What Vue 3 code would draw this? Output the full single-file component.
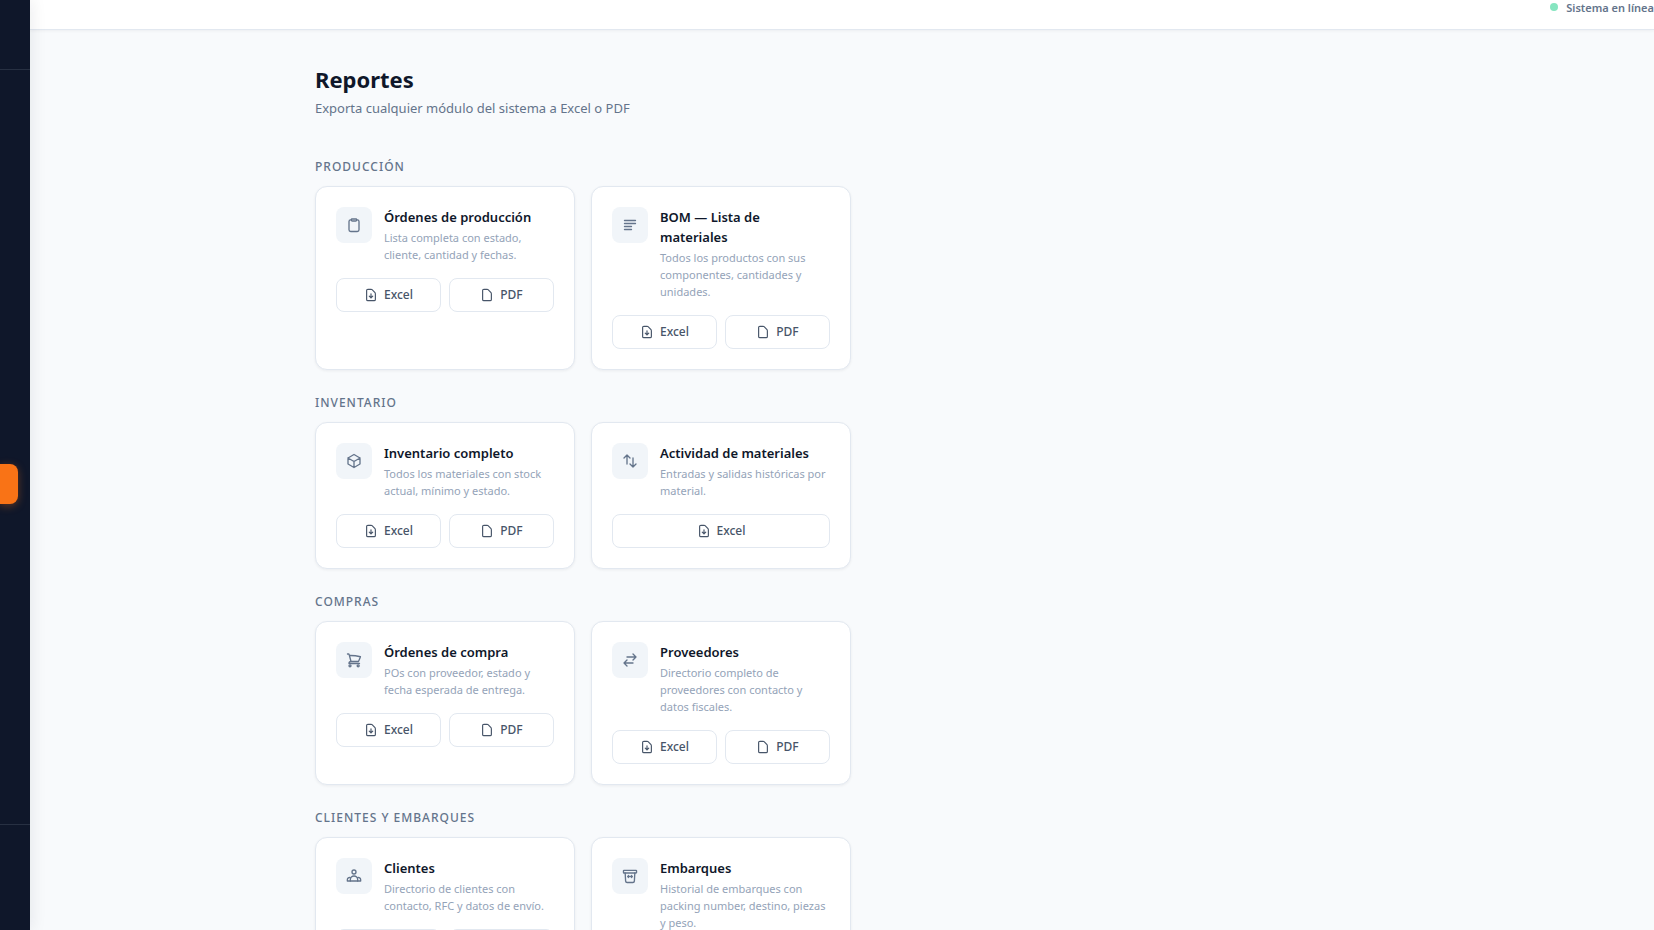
<script setup>
const page = 'M19.5 10.5v9A2.25 2.25 0 0 1 17.25 21.75H6.75A2.25 2.25 0 0 1 4.5 19.5V4.5A2.25 2.25 0 0 1 6.75 2.25h5.5c.6 0 1.17.24 1.6.66l4.99 5.1c.42.43.66 1 .66 2.49Z'
const icons = {
  clipboard: ['M9 3h6a1 1 0 0 1 1 1v.5A1.5 1.5 0 0 1 14.5 6h-5A1.5 1.5 0 0 1 8 4.5V4a1 1 0 0 1 1-1Z', 'M8 4.25H7A2.5 2.5 0 0 0 4.5 6.75v12.5a2.5 2.5 0 0 0 2.5 2.5h10a2.5 2.5 0 0 0 2.5-2.5V6.75a2.5 2.5 0 0 0-2.5-2.5h-1'],
  lines: ['M3.75 5.25h16.5M3.75 9.75h16.5M3.75 14.25h10.5M3.75 18.75h10.5'],
  cube: ['m21 7.5-9-5.25L3 7.5m18 0-9 5.25m9-5.25v9l-9 5.25M3 7.5l9 5.25M3 7.5v9l9 5.25m0-9v9'],
  upDown: ['M3 7.5 7.5 3m0 0L12 7.5M7.5 3v13.5m13.5 0L16.5 21m0 0L12 16.5m4.5 4.5V7.5'],
  leftRight: ['M7.5 21 3 16.5m0 0L7.5 12M3 16.5h13.5m0-13.5L21 7.5m0 0L16.5 12M21 7.5H7.5'],
  cart: ['M2.25 3h1.386c.51 0 .955.343 1.087.835l.383 1.437M7.5 14.25a3 3 0 0 0-3 3h15.75m-12.75-3h11.218c1.121-2.3 2.1-4.684 2.924-7.138a60.114 60.114 0 0 0-16.536-1.84M7.5 14.25 5.106 5.272', 'M7.5 20.75a1.5 1.5 0 1 1-3 0 1.5 1.5 0 0 1 3 0Zm12.25 0a1.5 1.5 0 1 1-3 0 1.5 1.5 0 0 1 3 0Z'],
  group: ['M15 6a3 3 0 1 1-6 0 3 3 0 0 1 6 0Z', 'M6.5 19.5v-2a5.5 5.5 0 0 1 11 0v2', 'M6.5 14.6A3.2 3.2 0 0 0 2 17.5v2h20v-2a3.2 3.2 0 0 0-4.5-2.9'],
  archive: ['M3 3.5h18a.8.8 0 0 1 .8.8V6.7a.8.8 0 0 1-.8.8H3a.8.8 0 0 1-.8-.8V4.3a.8.8 0 0 1 .8-.8Z', 'm4.75 7.5.7 12.2a2.2 2.2 0 0 0 2.2 2h8.7a2.2 2.2 0 0 0 2.2-2l.7-12.2', 'M9.5 11.25v3M14.5 11.25v3M8.5 12.75h7'],
  excel: [page, 'M12 10v7m-3-3 3 3 3-3'],
  pdf: [page],
}

const both = ['Excel', 'PDF']
const sections = [
  {
    name: 'Producción',
    reports: [
      { icon: 'clipboard', title: 'Órdenes de producción', text: 'Lista completa con estado, cliente, cantidad y fechas.', formats: both },
      { icon: 'lines', title: 'BOM — Lista de materiales', text: 'Todos los productos con sus componentes, cantidades y unidades.', formats: both },
    ],
  },
  {
    name: 'Inventario',
    reports: [
      { icon: 'cube', title: 'Inventario completo', text: 'Todos los materiales con stock actual, mínimo y estado.', formats: both },
      { icon: 'upDown', title: 'Actividad de materiales', text: 'Entradas y salidas históricas por material.', formats: ['Excel'] },
    ],
  },
  {
    name: 'Compras',
    reports: [
      { icon: 'cart', title: 'Órdenes de compra', text: 'POs con proveedor, estado y fecha esperada de entrega.', formats: both },
      { icon: 'leftRight', title: 'Proveedores', text: 'Directorio completo de proveedores con contacto y datos fiscales.', formats: both },
    ],
  },
  {
    name: 'Clientes y embarques',
    reports: [
      { icon: 'group', title: 'Clientes', text: 'Directorio de clientes con contacto, RFC y datos de envío.', formats: both },
      { icon: 'archive', title: 'Embarques', text: 'Historial de embarques con packing number, destino, piezas y peso.', formats: both },
    ],
  },
]
</script>

<template>
  <div class="app">
    <aside class="sidebar">
      <div class="brand"></div>
      <nav class="nav"><div class="active-item"></div></nav>
      <div class="account"></div>
    </aside>
    <div class="page">
      <header class="topbar">
        <span class="dot"></span>
        <span>Sistema en línea</span>
      </header>
      <main class="main">
        <div class="content">
          <h1>Reportes</h1>
          <p class="lead">Exporta cualquier módulo del sistema a Excel o PDF</p>
          <section v-for="section in sections" :key="section.name" class="section">
            <h2>{{ section.name }}</h2>
            <div class="cards">
              <article v-for="report in section.reports" :key="report.title" class="card">
                <div class="info">
                  <span class="tile">
                    <svg viewBox="0 0 24 24" aria-hidden="true"><path v-for="d in icons[report.icon]" :key="d" :d="d" /></svg>
                  </span>
                  <div class="copy">
                    <h3>{{ report.title }}</h3>
                    <p>{{ report.text }}</p>
                  </div>
                </div>
                <div class="actions">
                  <button v-for="format in report.formats" :key="format" type="button">
                    <svg viewBox="0 0 24 24" aria-hidden="true"><path v-for="d in icons[format.toLowerCase()]" :key="d" :d="d" /></svg>
                    {{ format }}
                  </button>
                </div>
              </article>
            </div>
          </section>
        </div>
      </main>
    </div>
  </div>
</template>

<style>
body {
  margin: 0;
}
</style>

<style scoped>
* {
  box-sizing: border-box;
}
.app {
  display: flex;
  height: 100vh;
  overflow: hidden;
  background: #f8fafc;
  color: #0f172a;
  font-family: "Segoe UI", "Noto Sans", "Open Sans", sans-serif;
}
h1,
h2,
h3,
p {
  margin: 0;
}
svg {
  fill: none;
  stroke: currentColor;
  stroke-width: 2;
  stroke-linecap: round;
  stroke-linejoin: round;
  flex: none;
}
.sidebar {
  display: flex;
  flex-direction: column;
  flex: none;
  width: 30px;
  background: #0f172a;
  box-shadow: 2px 0 16px rgba(15, 23, 42, 0.08);
  z-index: 1;
}
.brand {
  height: 70px;
  border-bottom: 1px solid #273042;
}
.nav {
  flex: 1;
  padding: 394px 12px 0 0;
}
.active-item {
  height: 40px;
  border-radius: 0 8px 8px 0;
  background: #f97316;
  box-shadow: 0 2px 8px rgba(249, 115, 22, 0.35);
}
.account {
  height: 106px;
  border-top: 1px solid #273042;
}
.page {
  display: flex;
  flex-direction: column;
  flex: 1;
  min-width: 0;
}
.topbar {
  display: flex;
  justify-content: flex-end;
  align-items: flex-start;
  gap: 8px;
  flex: none;
  height: 30px;
  border-bottom: 1px solid #e2e8f0;
  background: #fff;
  box-shadow: 0 1px 3px rgba(15, 23, 42, 0.05);
  color: #64748b;
  font-size: 11px;
  font-weight: 600;
  line-height: 16px;
}
.dot {
  width: 8px;
  height: 8px;
  margin-top: 3px;
  border-radius: 50%;
  background: #86e5c0;
}
.main {
  flex: 1;
  min-height: 0;
  padding: 33px 32px;
  overflow-y: auto;
  scrollbar-width: none;
}
.content {
  max-width: 1054px;
  margin: 0 auto;
}
h1 {
  font-size: 22px;
  font-weight: 700;
  line-height: 32px;
}
.lead {
  margin-top: 3px;
  color: #64748b;
  font-size: 13px;
  line-height: 20px;
}
.section {
  margin-top: 25px;
}
.lead + .section {
  margin-top: 41px;
}
h2 {
  margin-bottom: 11px;
  color: #64748b;
  font-size: 12px;
  font-weight: 500;
  line-height: 16px;
  letter-spacing: 1px;
  text-transform: uppercase;
}
.cards {
  display: grid;
  grid-template-columns: repeat(auto-fill, 260px);
  gap: 16px;
}
.card {
  padding: 20px;
  border: 1px solid #e2e8f0;
  border-radius: 12px;
  background: #fff;
  box-shadow: 0 1px 3px rgba(15, 23, 42, 0.06);
}
.info {
  display: flex;
  align-items: flex-start;
  gap: 12px;
}
.tile {
  display: grid;
  place-items: center;
  flex: none;
  width: 36px;
  height: 36px;
  border-radius: 8px;
  background: #f1f5f9;
  color: #64748b;
}
.tile svg {
  width: 16px;
  height: 16px;
}
.copy {
  min-width: 0;
}
h3 {
  font-size: 13px;
  font-weight: 600;
  line-height: 20px;
}
.copy p {
  margin-top: 2px;
  color: #94a3b8;
  font-size: 11px;
  line-height: 17px;
}
.actions {
  display: flex;
  gap: 8px;
  margin-top: 15px;
}
button {
  display: flex;
  justify-content: center;
  align-items: center;
  gap: 6px;
  flex: 1;
  height: 34px;
  padding: 0;
  border: 1px solid #e2e8f0;
  border-radius: 8px;
  background: #fff;
  color: #475569;
  font-family: inherit;
  font-size: 12px;
  font-weight: 500;
  line-height: 16px;
  cursor: pointer;
}
button svg {
  width: 14px;
  height: 14px;
}
</style>
